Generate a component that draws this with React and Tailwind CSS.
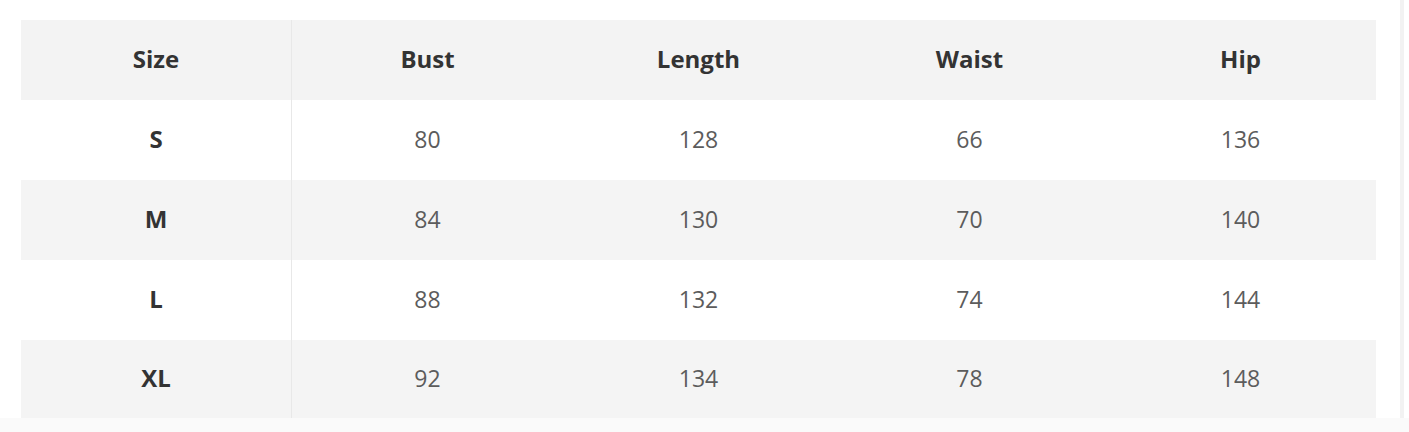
const HEADERS = ['Size', 'Bust', 'Length', 'Waist', 'Hip'];

const ROWS = [
  ['S', '80', '128', '66', '136'],
  ['M', '84', '130', '70', '140'],
  ['L', '88', '132', '74', '144'],
  ['XL', '92', '134', '78', '148'],
];

function Cell({ children, first, bold }) {
  return (
    <div
      className={`flex items-center justify-center pb-[2px] ${first ? 'border-r border-[#e8e8e8]' : ''} ${bold ? 'font-bold text-[#333] text-[24px]' : 'text-[#5c5c5c] text-[23px]'}`}
    >
      {children}
    </div>
  );
}

export default function App() {
  return (
    <div
      className="w-[1409px] h-[432px] bg-white flex flex-col"
      style={{ fontFamily: '"Open Sans", "Liberation Sans", sans-serif' }}
    >
      <div className="flex">
        <div className="pt-5 pl-[21px] w-[1400px]">
          <div className="w-[1355px]">
            <div className="grid grid-cols-5 h-20 bg-[#f3f3f3]">
              {HEADERS.map((h, i) => (
                <Cell key={h} first={i === 0} bold>
                  {h}
                </Cell>
              ))}
            </div>
            {ROWS.map((row, r) => (
              <div
                key={row[0]}
                className={`grid grid-cols-5 ${r === 3 ? 'h-[78px]' : 'h-20'} ${r % 2 === 1 ? 'bg-[#f4f4f4]' : 'bg-white'}`}
              >
                {row.map((v, i) => (
                  <Cell key={i} first={i === 0} bold={i === 0}>
                    {v}
                  </Cell>
                ))}
              </div>
            ))}
          </div>
        </div>
        <div className="w-1 bg-[#f2f2f2]" />
      </div>
      <div className="flex-1 bg-[#fafafa]" />
    </div>
  );
}
